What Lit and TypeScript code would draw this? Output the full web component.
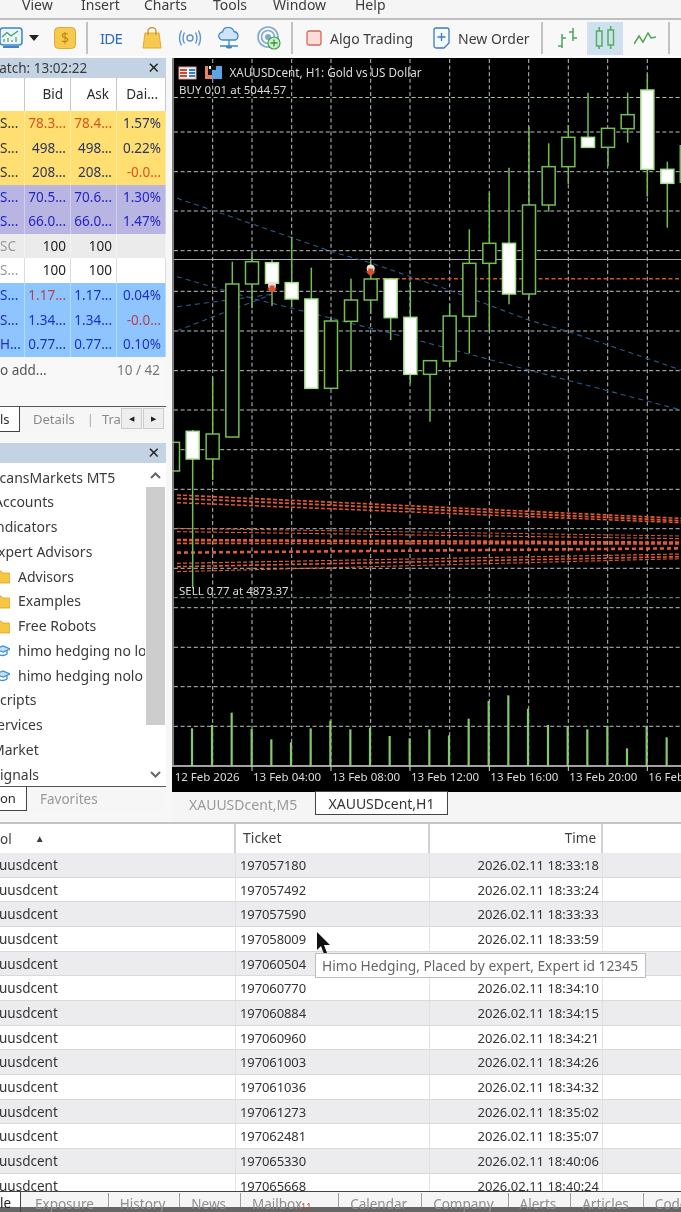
import { LitElement, html, css, svg } from "lit";
import { customElement } from "lit/decorators.js";

const zx5 = (v: number) => v / 3 + 172;
const zy5 = (v: number) => v / 3 + 60;
const zy6 = (v: number) => v / 3 + 430;

type C = [number, number, number, number, number, boolean];
// centre x, body top, body bottom, wick top, wick bottom, filled; zoomed coordinates
const candles: C[] = [
  [181, 672, 1131, 605, 1131, false],
  [240, 605, 672, 578, 745, false],
  [300, 608, 670, 600, 738, true],
  [359, 668, 717, 530, 742, true],
  [418, 717, 985, 623, 985, true],
  [477, 783, 985, 775, 985, false],
  [537, 720, 784, 656, 935, false],
  [596, 657, 720, 600, 762, false],
  [656, 657, 773, 657, 840, true],
  [715, 772, 943, 665, 970, true],
  [774, 902, 943, 902, 1085, false],
  [833, 768, 903, 732, 922, false],
  [892, 610, 769, 508, 880, false],
  [952, 550, 610, 398, 815, false],
  [1011, 550, 702, 323, 733, true],
  [1071, 435, 702, 200, 718, false],
  [1130, 320, 435, 250, 455, false],
  [1189, 232, 320, 195, 372, false],
  [1248, 232, 262, 98, 262, true],
  [1308, 205, 262, 205, 318, false],
  [1367, 164, 206, 98, 248, false],
  [1426, 90, 328, 42, 410, true],
  [1486, 328, 370, 305, 503, true],
  [122, 1122, 1197, 952, 1260, false],
  [62, 1114, 1197, 1110, 1585, true],
  [3, 1147, 1233, 1147, 1233, false],
];

const vols: [number, number][] = [[60,895],[120,885],[179,848],[239,897],[298,928],[357,937],[416,895],[475,872],[535,898],[594,893],[653,918],[713,925],[772,898],[831,916],[890,866],[950,813],[1009,796],[1068,836],[1128,885],[1187,889],[1246,898],[1306,888],[1365,955],[1424,889],[1484,922]];

const gridX = [212.7, 252, 291.7, 331, 370.7, 410, 449.7, 489.3, 528.7, 568.3, 607.7, 647.3];
const gridY = [132, 171.7, 211, 250.7, 291.3, 331, 370.7, 410, 449.7, 489.3, 528.7, 568.3, 607.7, 647.3, 686.7, 726.3];

const redBands: [number, number, number, string][] = [
  [195, 265, 1.6, "4 2"], [205, 272, 1.8, "4 2"], [218, 278, 1.5, "4 2"],
  [295, 318, 1, "4 2"], [305, 326, 1.1, "4 2"], [330, 338, 2.6, "4 2"], [340, 342, 1.6, "4 2"],
  [368, 355, 2.6, "4 3"], [400, 372, 1.2, "4 2"], [410, 380, 1.6, "4 2"], [425, 386, 1.1, "4 2"],
];

const blueLines = [
  "M15 415 L120 450 L480 575 L600 610 L830 690 L1070 780 L1190 815 L1527 930",
  "M15 650 L240 715 L420 760 L715 835 L1070 930 L1527 1050",
  "M15 740 L300 703",
  "M15 812 L300 703",
];

const toPage = (d: string) =>
  d.replace(/([ML])(\d+) (\d+)/g, (_m, c, x, y) => `${c}${zx5(+x).toFixed(1)} ${zy5(+y).toFixed(1)}`);

const watch = [
  ["S...", "78.3...", "78.4...", "1.57%", "y", "o", "o", ""],
  ["S...", "498...", "498...", "0.22%", "y", "", "", ""],
  ["S...", "208...", "208...", "-0.0...", "y", "", "", "o"],
  ["S...", "70.5...", "70.6...", "1.30%", "p", "", "", ""],
  ["S...", "66.0...", "66.0...", "1.47%", "p", "", "", ""],
  ["SC", "100", "100", "", "g", "", "", ""],
  ["S...", "100", "100", "", "w", "", "", ""],
  ["S...", "1.17...", "1.17...", "0.04%", "b", "r", "", ""],
  ["S...", "1.34...", "1.34...", "-0.0...", "b", "", "", "r"],
  ["H...", "0.77...", "0.77...", "0.10%", "b", "", "", ""],
];

// label, kind, horizontal crop offset of the label against the panel edge
const tree: [string, string, number][] = [
  ["icansMarkets MT5", "top", -4], ["Accounts", "top", -6], ["ndicators", "top", -4], ["xpert Advisors", "top", -2],
  ["Advisors", "folder", 0], ["Examples", "folder", 0], ["Free Robots", "folder", 0],
  ["himo hedging no lot", "cap", 0], ["himo hedging nolo", "cap", 0],
  ["cripts", "top", 0], ["ervices", "top", -3], ["Market", "top", -8], ["ignals", "top", 0],
];

const orders = [
  ["197057180", "18:33:18"], ["197057492", "18:33:24"], ["197057590", "18:33:33"], ["197058009", "18:33:59"],
  ["197060504", "18:34:04"], ["197060770", "18:34:10"], ["197060884", "18:34:15"], ["197060960", "18:34:21"],
  ["197061003", "18:34:26"], ["197061036", "18:34:32"], ["197061273", "18:35:02"], ["197062481", "18:35:07"],
  ["197065330", "18:40:06"], ["197065668", "18:40:24"],
];

const bottomTabs = ["Exposure", "History", "News", "Mailbox", "Calendar", "Company", "Alerts", "Articles", "Code Base"];

function chart() {
  const dates = [["12 Feb 2026", 5], ["13 Feb 04:00", 240], ["13 Feb 08:00", 477], ["13 Feb 12:00", 714], ["13 Feb 16:00", 952], ["13 Feb 20:00", 1189], ["16 Feb 00:00", 1426]] as [string, number][];
  const arrow = (x: number, y: number) => svg`<circle cx=${x} cy=${y - 3.5} r="4" fill="#f2ded8"/><path d="M${x - 2.500} ${y - 3.500}h5v3h2.500l-5 5l-5-5h2.500z" fill="#d9502e"/>`;
  return svg`<svg class="chart-svg" viewBox="172 58 509 734" width="509" height="734">
    <rect x="172" y="58" width="509" height="734" fill="#000"/>
    <g stroke="#bcc3c3" stroke-width="1" stroke-dasharray="4 2.600">
      ${gridX.map((x) => svg`<line x1=${x} x2=${x} y1="59" y2="765"/>`)}
      ${gridY.map((y) => svg`<line x1="174" x2="681" y1=${y} y2=${y}/>`)}
    </g>
    <line x1="174" x2="681" y1="97.500" y2="97.500" stroke="#a9c4a4" stroke-dasharray="4 2.600"/>
    <line x1="174" x2="681" y1="597.700" y2="597.700" stroke="#7c9c7c" stroke-dasharray="4 2.600"/>
    <line x1="174" x2="681" y1="259.500" y2="259.500" stroke="#a8adb4"/>
    <g fill="none" stroke="#2c5a8e" stroke-width="1.100" stroke-dasharray="5 4">
      ${blueLines.map((d) => svg`<path d=${toPage(d)}/>`)}
    </g>
    <g fill="none" stroke="#e05a33">
      ${redBands.map(([a, b, w, dash]) => svg`<line x1="177" x2="681" y1=${zy6(a)} y2=${zy6(b)} stroke-width=${w} stroke-dasharray=${dash}/>`)}
    </g>
    <line x1="376" x2="681" y1="278.700" y2="278.700" stroke="#d0552f" stroke-width="1.500" stroke-dasharray="4 2.500"/>
    ${candles.map(([x, t, b, wt, wb, f]) => svg`
      <line x1=${zx5(x)} x2=${zx5(x)} y1=${zy5(wt)} y2=${zy5(wb)} stroke="#74bf55" stroke-width="1.500"/>
      <rect x=${zx5(x) - 6.500} y=${zy5(t)} width="13" height=${(b - t) / 3} fill=${f ? "#fff" : "#000"} stroke=${f ? "#a6e08e" : "#74bf55"} stroke-width="1.500"/>`)}
    <line x1="680.500" x2="680.500" y1="145" y2="183" stroke="#74bf55" stroke-width="2"/>
    ${arrow(272, 289)}${arrow(370.700, 272)}
    <g stroke="#86c96e" stroke-width="2.200">
      ${vols.map(([x, t]) => svg`<line x1=${x / 3 + 172} x2=${x / 3 + 172} y1=${zy6(t)} y2="765.500"/>`)}
    </g>
    <line x1="172" x2="681" y1="766" y2="766" stroke="#d8d8d8" stroke-width="1.300"/>
    <line x1="173" x2="173" y1="58" y2="766" stroke="#a8a8a8" stroke-width="1.500"/>
    <g stroke="#d8d8d8">${dates.slice(1).map(([, x]) => svg`<line x1=${x / 3 + 172} x2=${x / 3 + 172} y1="766" y2="771"/>`)}</g>
    <g class="chart-text">
      ${dates.map(([d, x]) => svg`<text x=${x / 3 + 173} y="781">${d}</text>`)}
      <text class="title" x="229.500" y="77">XAUUSDcent, H1:  Gold vs US Dollar</text>
      <text x="179" y="94">BUY 0.01 at 5044.57</text>
      <text x="179" y="595">SELL 0.77 at 4873.37</text>
    </g>
    <g>
      <rect x="179" y="67" width="17" height="12" fill="#f2f6fb" stroke="#e09a8e"/>
      <path d="M180 70h7M180 73h7M180 76h7" stroke="#d9442f" stroke-width="2"/>
      <path d="M189 70h6M189 73h6M189 76h6" stroke="#2f7fd0" stroke-width="2"/>
      <rect x="205" y="66" width="7" height="13" fill="#e8826b"/>
      <rect x="212" y="66" width="10" height="13" fill="#5aa5e6"/>
      <path d="M208 66h8v4h-4v5h-4z" fill="#141414"/>
      <rect x="209" y="66" width="2" height="3" fill="#fff"/>
    </g>
  </svg>`;
}

@customElement("app-root")
export class AppRoot extends LitElement {
  static styles = css`
    :host {
      display: block;
      width: 681px;
      height: 1212px;
      overflow: hidden;
      position: relative;
      background: #f7f7f7;
      color: #2b2b2b;
      font-family: "Noto Sans", "Open Sans", sans-serif;
      font-size: 13px;
      filter: blur(0.35px);
    }
    .menu {
      height: 18px;
      border-bottom: 2px solid #bfbfbf;
      display: flex;
      background: #f5f5f5;
      overflow: hidden;
      font-size: 14px;
      line-height: 14px;
      color: #3c3c3c;
      padding-left: 22px;
    }
    .menu span { margin-top: -2px; }
    .menu span:nth-child(1) { width: 59px; }
    .menu span:nth-child(2) { width: 63px; }
    .menu span:nth-child(3) { width: 69px; }
    .menu span:nth-child(4) { width: 60px; }
    .menu span:nth-child(5) { width: 82px; }
    .toolbar {
      height: 36px;
      background: #f8f8f8;
      display: flex;
      align-items: center;
      overflow: hidden;
      font-size: 14px;
      color: #3d3d3d;
      white-space: nowrap;
    }
    .toolbar svg { display: block; flex: none; }
    .sep { width: 2px; height: 32px; background: #c2c2c2; flex: none; }
    .ide { color: #2e6db4; font-size: 15px; font-weight: 400; letter-spacing: -0.8px; width: 23px; }
    .active-box {
      width: 36px; height: 33px; background: #cfe0f0;
      display: flex; align-items: center; justify-content: center; flex: none;
    }
    .main {
      display: grid;
      grid-template-columns: 166px 6px 509px;
      height: 765px;
      border-top: 1px solid #fff;
    }
    .left { display: flex; flex-direction: column; overflow: hidden; }
    .panel-head {
      height: 20px;
      background: #c4d3e3;
      margin-top: 1px;
      display: flex;
      justify-content: space-between;
      align-items: center;
      padding-right: 6px;
      line-height: 20px;
      overflow: hidden;
      color: #3a3a3a;
      flex: none;
    }
    .x { font-size: 15px; font-weight: 700; color: #222; font-family: "DejaVu Sans", sans-serif; line-height: 20px; }
    .watch-title { margin-left: -13px; font-size: 13.500px; }
    .wgrid {
      display: grid;
      grid-template-columns: 25px 46px 46px 49px;
      flex: none;
    }
    .whead {
      height: 33px;
      line-height: 33px;
      text-align: right;
      padding-right: 7px;
      border-right: 1px solid #c8c8c8;
      background: #fff;
      font-size: 13.500px;
      box-sizing: border-box;
    }
    .whead:last-of-type { border-right: none; }
    .wcell {
      height: 24.570px;
      line-height: 24.570px;
      text-align: right;
      padding-right: 4px;
      box-sizing: border-box;
      white-space: nowrap;
      overflow: hidden;
      color: #2a3560;
      border-right: 1px solid rgba(255, 255, 255, 0.35);
      font-size: 13.500px;
    }
    .wname { text-align: left; padding: 0; color: #333; }
    .y { background: #ffde72; }
    .p { background: #b9b5e3; color: #2424c4; }
    .g { background: #ebebeb; color: #222; }
    .w { background: #fff; color: #222; border-right-color: #dcdcdc; }
    .b { background: #8fc5ff; color: #1d2fc4; }
    .g.wname, .w.wname { color: #999; }
    .o { color: #d9541e; }
    .r { color: #b5404e; }
    .add {
      height: 49px;
      background: #f8f8f8;
      display: flex;
      justify-content: space-between;
      align-items: flex-start;
      padding: 0 6px 0 0;
      line-height: 26px;
      color: #555;
      font-size: 13.500px;
      box-sizing: border-box;
      flex: none;
    }
    .add .n { color: #777; }
    .tabs1 {
      height: 26px;
      position: relative;
      display: flex;
      border-top: 1px solid #555;
      background: #f6f6f6;
      overflow: hidden;
      font-size: 13px;
      color: #8a8a8a;
      align-items: center;
      flex: none;
      box-sizing: border-box;
    }
    .tab-active {
      background: #fff;
      color: #2b2b2b;
      border-right: 1.500px solid #444;
      border-bottom: 1.500px solid #444;
      height: 100%;
      display: flex;
      align-items: center;
      box-sizing: border-box;
      flex: none;
    }
    .spin {
      position: absolute;
      right: 2px;
      top: 1px;
      display: flex;
      gap: 1px;
    }
    .spin b {
      width: 21px; height: 21px; background: #eee; border: 1px solid #ccc; box-sizing: border-box;
      display: flex; align-items: center; justify-content: center;
      font-size: 7px; color: #222; font-weight: 400;
    }
    .nav { margin-top: 11px; }
    .tree-wrap {
      height: 323px;
      background: #fff;
      position: relative;
      overflow: hidden;
      flex: none;
    }
    .tree { width: 145px; overflow: hidden; padding-top: 2px; }
    .tnode {
      height: 24.750px;
      line-height: 24.750px;
      white-space: nowrap;
      display: flex;
      align-items: center;
      font-size: 14px;
      color: #3a3a3a;
    }
    .tnode:first-child { margin-top: 1px; }
    .tnode svg { margin-left: -5px; margin-right: 8px; flex: none; width: 15px; }
    .scroll { position: absolute; right: 1px; top: 0; width: 19px; height: 100%; background: #fff; }
    .thumb { position: absolute; top: 24px; height: 238px; left: 0; right: 0; background: #cdcdcd; }
    .chev { position: absolute; left: 4px; }
    .tabs2 { height: 25px; }
    .tabs2 .fav { margin-left: 13px; color: #999; font-size: 13.500px; }
    .tabs2 .tab-active { width: 27px; }
    .right { display: flex; flex-direction: column; overflow: hidden; position: relative; }
    .chart-svg { display: block; flex: none; margin-top: 1px; }
    .chart-text { fill: #dcdcdc; font-size: 11.500px; font-family: "Noto Sans", "Open Sans", sans-serif; white-space: pre; }
    .chart-text .title { font-size: 11.700px; }
    .ctabs {
      height: 30px;
      flex: none;
      background: #f5f5f5;
      display: flex;
      align-items: flex-start;
      font-size: 14px;
      color: #9a9a9a;
      padding-left: 17px;
      line-height: 25px;
    }
    .ctab-m5 { width: 126px; flex: none; }
    .ctab-h1 {
      flex: none;
      width: 133px;
      height: 24px;
      margin-top: -1px;
      position: relative;
      box-sizing: border-box;
      background: #fff;
      border: 1px solid #444;
      color: #333;
      text-align: center;
      line-height: 23px;
    }
    .table {
      border-top: 2px solid #c4c4c4;
      background: #fff;
      height: 388px;
      overflow: hidden;
      position: relative;
    }
    .thead, .row { display: grid; grid-template-columns: 236px 194px 173px 1fr; }
    .thead { height: 29px; line-height: 28px; color: #3e3e3e; font-size: 13.500px; }
    .thead > div { border-right: 2px solid #d2d2d2; box-sizing: border-box; }
    .thead > div:nth-child(2) { padding-left: 7px; font-size: 14px; }
    .thead > div:nth-child(3) { text-align: right; padding-right: 5px; }
    .thead > div:last-child { border: none; }
    .sort { font-size: 10px; margin-left: 23px; vertical-align: 2px; }
    .row {
      height: 24.680px;
      line-height: 24.500px;
      box-sizing: border-box;
      border-bottom: 1px solid #d9d9d9;
      font-size: 13px;
      color: #333;
    }
    .row:nth-child(odd) { background: #ececef; }
    .row > div { border-right: 1px solid #e2e2e2; box-sizing: border-box; overflow: hidden; white-space: nowrap; }
    .row > div:last-child { border: none; }
    .row .sym { text-indent: -1px; font-size: 13.500px; }
    .row .tk { padding-left: 4px; letter-spacing: -0.1px; }
    .row .tm { text-align: right; padding-right: 3px; }
    .tip {
      position: absolute;
      left: 315px;
      top: 129px;
      width: 331px;
      height: 25px;
      box-sizing: border-box;
      background: #fff;
      border: 1px solid #bdbdbd;
      color: #666;
      font-size: 13.800px;
      line-height: 23px;
      padding-left: 6px;
      white-space: nowrap;
      overflow: hidden;
    }
    .cursor { position: absolute; left: 316px; top: 108px; }
    .btabs {
      position: absolute;
      left: 0;
      right: 0;
      bottom: 0;
      height: 21px;
      background: linear-gradient(#f5f5f5 0 15px, #666 15px);
      border-top: 1px solid #444;
      display: flex;
      align-items: flex-start;
      font-size: 13.500px;
      line-height: 22px;
      color: #8d8d8d;
      white-space: nowrap;
      overflow: hidden;
      box-sizing: border-box;
    }
    .ble { width: 21px; margin-right: 3px; border-right: 1px solid #444; height: 21px; color: #222; flex: none; box-sizing: border-box; background: linear-gradient(#fff 0 15px, #666 15px); }
    .bt { flex: none; padding: 0 14px 0 11px; border-right: 1px solid #a0a0a0; height: 14px; line-height: 22px; position: relative; margin-top: 1px; }
    .bt.mail { padding-right: 36px; }
    .bt:last-child { border: none; }
    .badge { position: absolute; left: 60px; top: 8px; color: #cc3b2e; font-size: 9px; line-height: 12px; }
  `;

  toolbar() {
    const gap = (w: number) => html`<span style="width:${w}px;flex:none"></span>`;
    return html`<div class="toolbar">
      <svg width="24" height="24" viewBox="0 0 24 24">
        <rect x="0" y="2" width="22" height="17" rx="3" fill="#eaf3fb" stroke="#3e84c8" stroke-width="1.500"/>
        <path d="M2 11 L7 6.500 L11 10 L18 5" fill="none" stroke="#3ea35a" stroke-width="1.300"/>
        <path d="M4 16v-3M8 16v-4M12 16v-2M16 16v-5" stroke="#57a86f" stroke-width="1.300"/>
        <path d="M3 21h16" stroke="#3e84c8" stroke-width="2"/>
      </svg>
      ${gap(5)}
      <svg width="10" height="6" viewBox="0 0 10 6"><path d="M0 0h10L5 6z" fill="#222"/></svg>
      ${gap(15)}
      <svg width="22" height="22" viewBox="0 0 22 22"><rect x="0.500" y="0.500" width="21" height="21" rx="4" fill="#f7ca4f" stroke="#e0a82c"/><text x="11" y="16" text-anchor="middle" font-size="14" fill="#b98512" font-family="Noto Sans, sans-serif">$</text></svg>
      ${gap(10)}<span class="sep"></span>${gap(12)}
      <span class="ide">IDE</span>
      ${gap(19)}
      <svg width="20" height="22" viewBox="0 0 20 22"><path d="M3 6h14l2 15H1z" fill="#f6c94f" stroke="#e0ab32"/><path d="M6 8V4a4 3.500 0 0 1 8 0v4" fill="none" stroke="#c99520" stroke-width="1.300"/></svg>
      ${gap(16)}
      <svg width="24" height="18" viewBox="0 0 24 18" fill="none" stroke="#5f93cf" stroke-width="1.400"><circle cx="12" cy="9" r="3"/><path d="M6.500 3.500Q3.500 9 6.500 14.500M3.500 1.500Q-0.500 9 3.500 16.500M17.500 3.500Q20.500 9 17.500 14.500M20.500 1.500Q24.500 9 20.500 16.500"/></svg>
      ${gap(15)}
      <svg width="24" height="23" viewBox="0 0 24 23"><path d="M6 13a4 4 0 0 1 -0.500-8A6 6 0 0 1 17 4.500a4.500 4.500 0 0 1 1.500 8.500z" fill="#cfe4f7" stroke="#3f87cc" stroke-width="1.300"/><path d="M12 13v6M3 19h18" stroke="#3f87cc" stroke-width="1.300"/><ellipse cx="12" cy="20" rx="3" ry="1.500" fill="#3f87cc"/></svg>
      ${gap(16)}
      <svg width="24" height="24" viewBox="0 0 24 24" fill="none"><circle cx="11" cy="11" r="10" stroke="#7fa9d0" stroke-width="1.600"/><circle cx="11" cy="11" r="6.500" stroke="#7fa9d0" stroke-width="1.600"/><circle cx="11" cy="11" r="3" fill="#7fa9d0"/><circle cx="17" cy="17" r="6" fill="#cdeccb" stroke="#3fa24c" stroke-width="1.200"/><path d="M17 13.500v7M13.500 17h7" stroke="#2e9a3c" stroke-width="1.300"/></svg>
      ${gap(10)}<span class="sep"></span>${gap(13)}
      <svg width="16" height="16" viewBox="0 0 16 16"><rect x="1" y="1" width="14" height="14" rx="2" fill="#fbdcd6" stroke="#d4675a" stroke-width="1.300"/></svg>
      ${gap(8)}
      <span style="width:83px;flex:none">Algo Trading</span>
      ${gap(20)}
      <svg width="17" height="22" viewBox="0 0 17 22" fill="none" stroke="#3f79bd" stroke-width="1.300"><path d="M3 1h11a2 2 0 0 1 2 2v13l-5 5H3a2 2 0 0 1-2-2V3a2 2 0 0 1 2-2z" fill="#f4f9fe"/><path d="M8.500 6v8M4.500 10h8"/></svg>
      ${gap(8)}
      <span style="width:72px;flex:none">New Order</span>
      ${gap(11)}<span class="sep"></span>${gap(14)}
      <svg width="22" height="22" viewBox="0 0 22 22" fill="none" stroke="#4fa45a" stroke-width="1.500"><path d="M5 7v14M1 19h4M5 11h4M16 1v13M12 5h4M16 11h4"/></svg>
      ${gap(8)}
      <span class="active-box"><svg width="20" height="24" viewBox="0 0 20 24" fill="none" stroke="#4fb05a" stroke-width="1.500"><rect x="1.500" y="5" width="5.500" height="15"/><path d="M4.200 1v4M4.200 20v3"/><rect x="13" y="4" width="5.500" height="15"/><path d="M15.700 0v4M15.700 19v4"/></svg></span>
      ${gap(11)}
      <svg width="22" height="14" viewBox="0 0 22 14" fill="none" stroke="#4fa45a" stroke-width="1.500"><path d="M0 13 L5 5 L9 11 L14 2 L17 7 L22 6"/></svg>
      ${gap(12)}<span class="sep"></span>
    </div>`;
  }

  left() {
    return html`<div class="left">
      <div class="panel-head"><span class="watch-title">Watch: 13:02:22</span><span class="x">✕</span></div>
      <div class="wgrid">
        <div class="whead"></div><div class="whead">Bid</div><div class="whead">Ask</div><div class="whead">Dai...</div>
        ${watch.map((r) => html`
          <div class="wcell wname ${r[4]}">${r[0]}</div>
          <div class="wcell ${r[4]} ${r[5]}">${r[1]}</div>
          <div class="wcell ${r[4]} ${r[6]}">${r[2]}</div>
          <div class="wcell ${r[4]} ${r[7]}">${r[3]}</div>`)}
      </div>
      <div class="add"><span>o add...</span><span class="n">10 / 42</span></div>
      <div class="tabs1">
        <span class="tab-active" style="width:20px">ls</span>
        <span style="margin-left:13px">Details</span>
        <span style="margin-left:12px;color:#aaa">|</span>
        <span style="margin-left:8px">Tra</span>
        <span class="spin"><b>◀</b><b>▶</b></span>
      </div>
      <div class="panel-head nav"><span></span><span class="x">✕</span></div>
      <div class="tree-wrap">
        <div class="tree">
          ${tree.map(([t, k, off]) => html`<div class="tnode ${k}" style="margin-left:${off}px">
            ${k === "folder"
              ? html`<svg height="14" viewBox="0 0 15 14"><path d="M0 1h6l2 2h6a1 1 0 0 1 1 1v9H0z" fill="#f6c644" stroke="#d9a521" stroke-width="0.800"/></svg>`
              : k === "cap"
              ? html`<svg height="12" viewBox="0 0 15 12" fill="none" stroke="#3f8ed0" stroke-width="1.300"><path d="M0 4 8 1l7 3-7 3z" fill="#bfe0f7"/><path d="M3 6v3c3 2 6 2 9 0V6"/></svg>`
              : ""}${t}</div>`)}
        </div>
        <div class="scroll">
          <svg class="chev" style="top:9px" width="11" height="7" viewBox="0 0 11 7" fill="none" stroke="#666" stroke-width="2"><path d="M1 6l4.500-4.500L10 6"/></svg>
          <div class="thumb"></div>
          <svg class="chev" style="top:308px" width="11" height="7" viewBox="0 0 11 7" fill="none" stroke="#666" stroke-width="2"><path d="M1 1l4.500 4.500L10 1"/></svg>
        </div>
      </div>
      <div class="tabs1 tabs2">
        <span class="tab-active">on</span>
        <span class="fav">Favorites</span>
      </div>
    </div>`;
  }

  render() {
    return html`
      <div class="menu"><span>View</span><span>Insert</span><span>Charts</span><span>Tools</span><span>Window</span><span>Help</span></div>
      ${this.toolbar()}
      <div class="main">
        ${this.left()}
        <div></div>
        <div class="right">
          ${chart()}
          <div class="ctabs"><span class="ctab-m5">XAUUSDcent,M5</span><span class="ctab-h1">XAUUSDcent,H1</span></div>
        </div>
      </div>
      <div class="table">
        <div class="thead"><div>ol<span class="sort">▲</span></div><div>Ticket</div><div>Time</div><div></div></div>
        <div class="rows">
          ${orders.map(([t, tm]) => html`<div class="row"><div class="sym">uusdcent</div><div class="tk">${t}</div><div class="tm">2026.02.11 ${tm}</div><div></div></div>`)}
        </div>
        <svg class="cursor" width="15" height="24" viewBox="0 0 15 24"><path d="M1 0v18l4-4 3 8 3-1-3-8h6z" fill="#111"/></svg>
        <div class="tip">Himo Hedging, Placed by expert, Expert id 12345</div>
      </div>
      <div class="btabs">
        <span class="ble">le</span>
        ${bottomTabs.map((t) => html`<span class="bt ${t === "Mailbox" ? "mail" : ""}">${t}${t === "Mailbox" ? html`<span class="badge">11</span>` : ""}</span>`)}
      </div>
    `;
  }
}
